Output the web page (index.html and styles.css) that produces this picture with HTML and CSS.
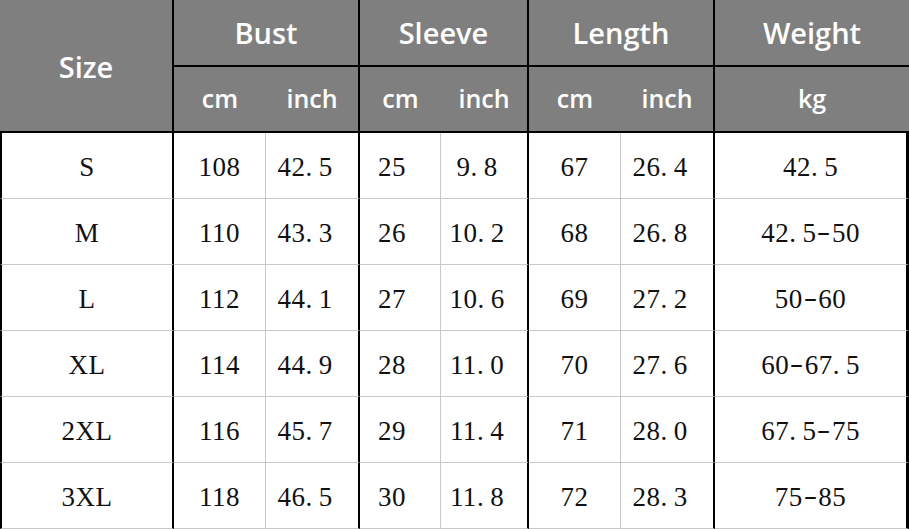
FILE: index.html
```html
<!DOCTYPE html>
<html>
<head>
<meta charset="utf-8">
<link rel="stylesheet" href="styles.css">
</head>
<body>
<div class="chart">
  <div class="h size">Size</div>
  <div class="h group bust">Bust</div>
  <div class="h group sleeve">Sleeve</div>
  <div class="h group length">Length</div>
  <div class="h group weight">Weight</div>

  <div class="h sub cm">cm</div>
  <div class="h sub inch">inch</div>
  <div class="h sub cm">cm</div>
  <div class="h sub inch">inch</div>
  <div class="h sub cm">cm</div>
  <div class="h sub inch">inch</div>
  <div class="h sub kg">kg</div>

  <div class="c sz">S</div><div class="c cm">108</div><div class="c inch">42<span class="dot">.</span>5</div><div class="c cm sl">25</div><div class="c inch">9<span class="dot">.</span>8</div><div class="c cm">67</div><div class="c inch">26<span class="dot">.</span>4</div><div class="c kg">42<span class="dot">.</span>5</div>
  <div class="c sz">M</div><div class="c cm">110</div><div class="c inch">43<span class="dot">.</span>3</div><div class="c cm sl">26</div><div class="c inch">10<span class="dot">.</span>2</div><div class="c cm">68</div><div class="c inch">26<span class="dot">.</span>8</div><div class="c kg">42<span class="dot">.</span>5<span class="dash">-</span>50</div>
  <div class="c sz">L</div><div class="c cm">112</div><div class="c inch">44<span class="dot">.</span>1</div><div class="c cm sl">27</div><div class="c inch">10<span class="dot">.</span>6</div><div class="c cm">69</div><div class="c inch">27<span class="dot">.</span>2</div><div class="c kg">50<span class="dash">-</span>60</div>
  <div class="c sz">XL</div><div class="c cm">114</div><div class="c inch">44<span class="dot">.</span>9</div><div class="c cm sl">28</div><div class="c inch">11<span class="dot">.</span>0</div><div class="c cm">70</div><div class="c inch">27<span class="dot">.</span>6</div><div class="c kg">60<span class="dash">-</span>67<span class="dot">.</span>5</div>
  <div class="c sz">2XL</div><div class="c cm">116</div><div class="c inch">45<span class="dot">.</span>7</div><div class="c cm sl">29</div><div class="c inch">11<span class="dot">.</span>4</div><div class="c cm">71</div><div class="c inch">28<span class="dot">.</span>0</div><div class="c kg">67<span class="dot">.</span>5<span class="dash">-</span>75</div>
  <div class="c sz">3XL</div><div class="c cm">118</div><div class="c inch">46<span class="dot">.</span>5</div><div class="c cm sl">30</div><div class="c inch">11<span class="dot">.</span>8</div><div class="c cm">72</div><div class="c inch">28<span class="dot">.</span>3</div><div class="c kg">75<span class="dash">-</span>85</div>
</div>
</body>
</html>
```
FILE: styles.css
```css
* { box-sizing: border-box; }
html, body { margin: 0; padding: 0; background: #fff; }
body { width: 909px; height: 529px; overflow: hidden; }

.chart {
  display: grid;
  grid-template-columns: 174px 92px 94px 81px 88px 92px 94px 194px;
  grid-template-rows: 67px 66px repeat(6, 66px);
  width: 909px;
}

.h {
  background: #7f7f7f;
  color: #fff;
  font-family: "Open Sans", "Noto Sans", sans-serif;
  font-weight: 600;
  display: flex;
  align-items: center;
  justify-content: center;
}

.size {
  grid-row: 1 / span 2;
  grid-column: 1;
  font-size: 29px;
  border-right: 2px solid #000;
  border-bottom: 2px solid #000;
  padding-top: 2px;
}

.group {
  font-size: 29px;
  border-bottom: 2px solid #000;
  border-right: 2px solid #000;
  padding-bottom: 1px;
}
.bust { grid-column: 2 / span 2; }
.sleeve { grid-column: 4 / span 2; }
.length { grid-column: 6 / span 2; }
.weight { grid-column: 8; border-right: none; }

.sub {
  font-size: 25px;
  font-weight: 600;
  border-bottom: 2px solid #000;
  padding-bottom: 2px;
}
.sub.inch { border-right: 2px solid #000; }

.c {
  font-family: "Liberation Serif", "Times New Roman", serif;
  font-size: 27px;
  letter-spacing: 0.5px;
  color: #111;
  display: flex;
  align-items: center;
  justify-content: center;
  border-bottom: 1px solid #c6c8cc;
  padding-top: 4px;
  white-space: nowrap;
}
.c.sz { border-left: 2px solid #000; border-right: 2px solid #000; }
.c.cm { border-right: 1px solid #c6c8cc; }
.c.cm.sl { padding-right: 16px; }
.c.inch { border-right: 2px solid #000; padding-right: 14px; }
.c.kg { border-right: 3px solid #000; }

.dot { margin-right: 6px; }
.dash { display: inline-block; transform: translateY(-2px) scaleX(1.5); margin: 0 3px; }
```
